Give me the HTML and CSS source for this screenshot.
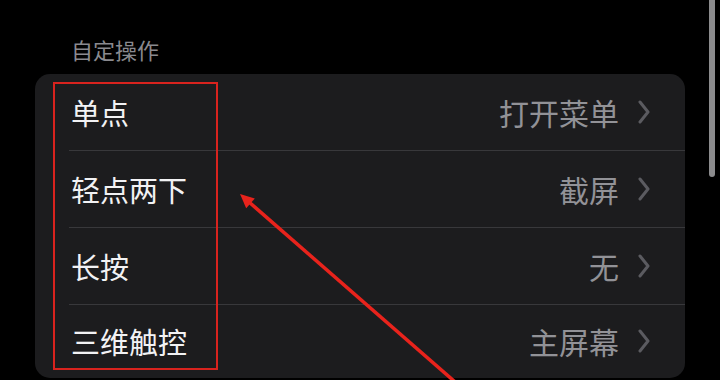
FILE: index.html
```html
<!DOCTYPE html>
<html lang="zh">
<head>
<meta charset="utf-8">
<link rel="stylesheet" href="styles.css">
</head>
<body>
<div class="screen">
  <div class="section-title">自定操作</div>
  <div class="card">
    <div class="row">
      <span class="label">单点</span>
      <span class="value">打开菜单</span>
      <svg class="chev" viewBox="0 0 14 24" width="14" height="24"><polyline points="3,2 11,12 3,22" /></svg>
    </div>
    <div class="sep"></div>
    <div class="row">
      <span class="label">轻点两下</span>
      <span class="value">截屏</span>
      <svg class="chev" viewBox="0 0 14 24" width="14" height="24"><polyline points="3,2 11,12 3,22" /></svg>
    </div>
    <div class="sep"></div>
    <div class="row">
      <span class="label">长按</span>
      <span class="value">无</span>
      <svg class="chev" viewBox="0 0 14 24" width="14" height="24"><polyline points="3,2 11,12 3,22" /></svg>
    </div>
    <div class="sep"></div>
    <div class="row last">
      <span class="label">三维触控</span>
      <span class="value">主屏幕</span>
      <svg class="chev" viewBox="0 0 14 24" width="14" height="24"><polyline points="3,2 11,12 3,22" /></svg>
    </div>
  </div>

  <div class="highlight"></div>
  <svg class="arrow" viewBox="0 0 720 380" width="720" height="380">
    <line x1="249" y1="202" x2="462" y2="388" />
    <polygon points="240,194 246.2,208.2 254.8,198.4" />
  </svg>
  <div class="scrollbar"></div>
</div>
</body>
</html>
```
FILE: styles.css
```css
html, body {
  margin: 0;
  padding: 0;
  background: #000;
}
.screen {
  position: relative;
  width: 720px;
  height: 380px;
  overflow: hidden;
  font-family: "Noto Sans CJK SC", "Noto Sans", sans-serif;
  background: #000;
}
.section-title {
  padding: 36px 0 12px 71px;
  font-size: 22px;
  line-height: 26px;
  color: #8a8a8f;
}
.card {
  margin: 0 0 0 35px;
  width: 650px;
  background: #1c1c1e;
  border-radius: 15px;
  display: flex;
  flex-direction: column;
}
.row {
  height: 76px;
  display: flex;
  align-items: center;
  padding: 0 34px 0 36px;
}
.row.last {
  height: 73px;
  padding-bottom: 2px;
  box-sizing: border-box;
}
.sep {
  height: 1px;
  margin-left: 34px;
  background: #38383b;
}
.label {
  flex: 1;
  font-size: 29px;
  line-height: 34px;
  color: #f2f2f4;
}
.value {
  font-size: 30px;
  line-height: 34px;
  color: #929297;
  margin-right: 18px;
}
.chev polyline {
  fill: none;
  stroke: #5b5b60;
  stroke-width: 3;
  stroke-linecap: round;
  stroke-linejoin: round;
}
.highlight {
  position: absolute;
  left: 53px;
  top: 82px;
  width: 165px;
  height: 288px;
  box-sizing: border-box;
  border: 2px solid #d8231e;
}
.arrow {
  position: absolute;
  left: 0;
  top: 0;
}
.arrow line {
  stroke: #e8231c;
  stroke-width: 3.5;
}
.arrow polygon {
  fill: #e8231c;
}
.scrollbar {
  position: absolute;
  left: 709px;
  top: -4px;
  width: 6px;
  height: 181px;
  border-radius: 3px;
  background: #8c8c8e;
}
```
